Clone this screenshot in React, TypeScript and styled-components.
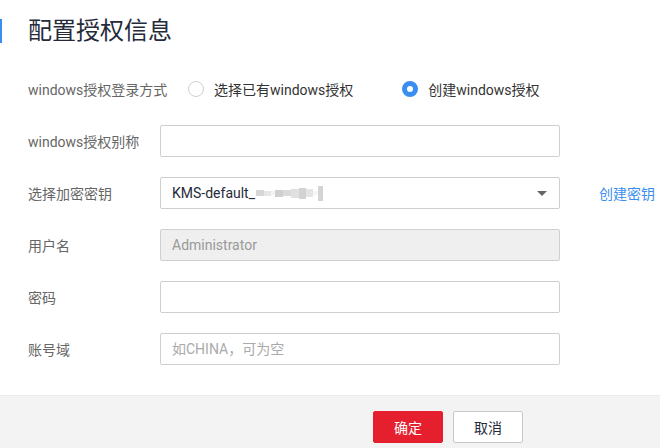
import React, { useState } from 'react';
import styled, { createGlobalStyle } from 'styled-components';

const GlobalStyle = createGlobalStyle`
  html, body {
    margin: 0;
    padding: 0;
    background: #ffffff;
  }
  body {
    font-family: Roboto, "Noto Sans CJK SC", sans-serif;
    color: #333333;
  }
  * {
    box-sizing: border-box;
  }
`;

const Page = styled.div`
  width: 660px;
  height: 448px;
  display: flex;
  flex-direction: column;
  overflow: hidden;
`;

const Header = styled.div`
  margin-top: 19px;
  border-left: 2px solid #3a8ef0;
  padding-left: 26px;
`;

const Title = styled.h1`
  margin: 0;
  font-size: 24px;
  line-height: 24px;
  font-weight: 400;
  color: #252b3a;
`;

const Form = styled.div`
  margin-top: 30px;
  padding-left: 28px;
  display: flex;
  flex-direction: column;
  gap: 20px;
`;

const Row = styled.div`
  display: flex;
  align-items: center;
  height: 32px;
`;

const Label = styled.div`
  width: 132px;
  flex-shrink: 0;
  white-space: nowrap;
  font-size: 14px;
  color: #666666;
`;

const RadioGroup = styled.div`
  display: flex;
  align-items: center;
  margin-left: 28px;
`;

const RadioOption = styled.label`
  display: flex;
  align-items: center;
  gap: 10px;
  margin-right: 49px;
  font-size: 14px;
  color: #333333;
  cursor: pointer;
`;

const RadioCircle = styled.span<{ $checked: boolean }>`
  width: 16px;
  height: 16px;
  border-radius: 50%;
  flex-shrink: 0;
  border: ${p => (p.$checked ? '5px solid #3a8ef0' : '1px solid #cfcfcf')};
  background: #ffffff;
`;

const Input = styled.input`
  width: 400px;
  height: 32px;
  padding: 0 11px;
  border: 1px solid #cfcfcf;
  border-radius: 2px;
  font-family: Roboto, "Noto Sans CJK SC", sans-serif;
  font-size: 14px;
  color: #252b3a;
  outline: none;
  background: #ffffff;

  &::placeholder {
    color: #aaaaaa;
  }

  &:disabled {
    background: #efefef;
    color: #999999;
  }
`;

const Select = styled.div`
  width: 400px;
  height: 32px;
  padding: 0 12px 0 11px;
  border: 1px solid #cfcfcf;
  border-radius: 2px;
  display: flex;
  align-items: center;
  justify-content: space-between;
  font-size: 14px;
  color: #252b3a;
`;

const SelectValue = styled.span`
  display: flex;
  align-items: center;
`;

const Redacted = styled.span`
  display: inline-flex;
  align-items: center;
  height: 16px;
  margin-left: 1px;
  filter: blur(0.6px);
`;

const Pixel = styled.span<{ $w: number; $h: number; $c: string }>`
  display: inline-block;
  width: ${p => p.$w}px;
  height: ${p => p.$h}px;
  background: ${p => p.$c};
`;

const Arrow = styled.span`
  width: 0;
  height: 0;
  border-left: 5px solid transparent;
  border-right: 5px solid transparent;
  border-top: 5px solid #666666;
`;

const Link = styled.a`
  margin-left: 39px;
  font-size: 14px;
  color: #3a8ef0;
  text-decoration: none;
  white-space: nowrap;
`;

const Footer = styled.div`
  margin-top: auto;
  height: 53px;
  border-top: 1px solid #ebebeb;
  background: #f3f3f3;
  display: flex;
  align-items: flex-start;
  gap: 10px;
  padding: 15px 0 0 373px;
`;

const Button = styled.button<{ $primary?: boolean }>`
  width: 70px;
  height: 32px;
  border-radius: 2px;
  font-family: Roboto, "Noto Sans CJK SC", sans-serif;
  font-size: 14px;
  cursor: pointer;
  border: 1px solid ${p => (p.$primary ? '#e51f2e' : '#c8c8c8')};
  background: ${p => (p.$primary ? '#e51f2e' : '#ffffff')};
  color: ${p => (p.$primary ? '#ffffff' : '#252b3a')};
`;

const redactedBlocks = [
  { w: 8, h: 6, c: '#d6d6d6' },
  { w: 7, h: 5, c: '#e6e6e6' },
  { w: 4, h: 4, c: '#f4f4f4' },
  { w: 8, h: 7, c: '#d0d0d0' },
  { w: 8, h: 6, c: '#dadada' },
  { w: 8, h: 9, c: '#e0e0e0' },
  { w: 7, h: 11, c: '#d2d2d2' },
  { w: 7, h: 8, c: '#e4e4e4' },
  { w: 5, h: 4, c: '#f5f5f5' },
  { w: 5, h: 15, c: '#d4d4d4' },
];

export default function App() {
  const [mode, setMode] = useState<'existing' | 'create'>('create');

  return (
    <>
      <GlobalStyle />
      <Page>
        <Header>
          <Title>配置授权信息</Title>
        </Header>

        <Form>
          <Row>
            <Label>windows授权登录方式</Label>
            <RadioGroup>
              <RadioOption onClick={() => setMode('existing')}>
                <RadioCircle $checked={mode === 'existing'} />
                选择已有windows授权
              </RadioOption>
              <RadioOption onClick={() => setMode('create')}>
                <RadioCircle $checked={mode === 'create'} />
                创建windows授权
              </RadioOption>
            </RadioGroup>
          </Row>

          <Row>
            <Label>windows授权别称</Label>
            <Input type="text" />
          </Row>

          <Row>
            <Label>选择加密密钥</Label>
            <Select>
              <SelectValue>
                KMS-default_
                <Redacted>
                  {redactedBlocks.map((b, i) => (
                    <Pixel key={i} $w={b.w} $h={b.h} $c={b.c} />
                  ))}
                </Redacted>
              </SelectValue>
              <Arrow />
            </Select>
            <Link href="#">创建密钥</Link>
          </Row>

          <Row>
            <Label>用户名</Label>
            <Input type="text" value="Administrator" disabled readOnly />
          </Row>

          <Row>
            <Label>密码</Label>
            <Input type="password" />
          </Row>

          <Row>
            <Label>账号域</Label>
            <Input type="text" placeholder="如CHINA，可为空" />
          </Row>
        </Form>

        <Footer>
          <Button $primary>确定</Button>
          <Button>取消</Button>
        </Footer>
      </Page>
    </>
  );
}
